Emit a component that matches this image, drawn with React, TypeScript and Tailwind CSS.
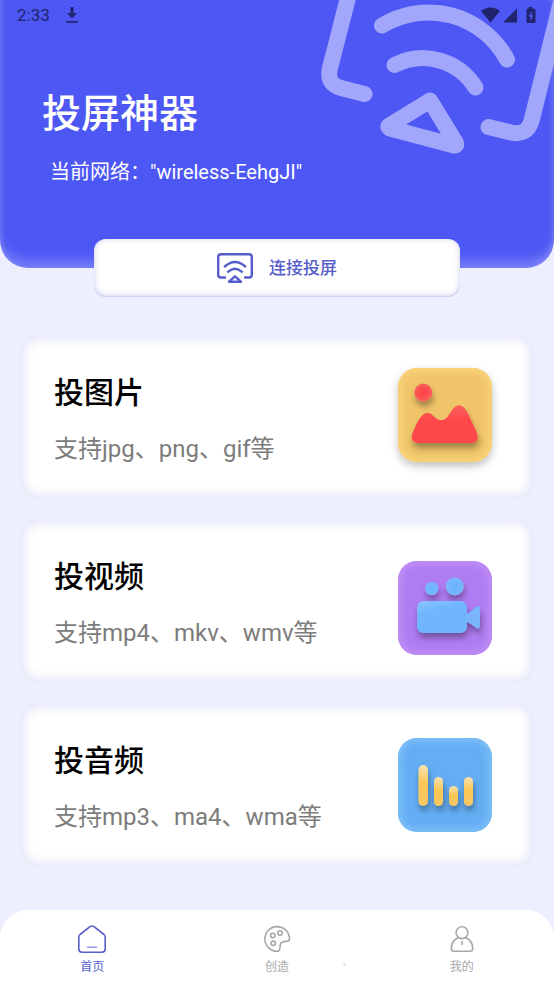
import React from "react";

interface CardProps {
  title: string;
  desc: string;
  icon: React.ReactNode;
}

interface TileProps {
  id: string;
  color: string;
  glow: string;
  viewBox: string;
  shadow?: boolean;
  children: React.ReactNode;
}

const StatusBar = () => (
  <div className="flex h-[30px] items-center justify-between pl-[17px] pr-[17px] text-[#20246f]">
    <div className="flex items-center gap-4">
      <span className="text-[17px] leading-5">2:33</span>
      <svg className="h-4 w-3" viewBox="0 0 12 16" fill="currentColor">
        <path d="M4.500 0h3v6H11l-5 5.500-5-5.500h3.500zM0 14h12v1.700H0z" />
      </svg>
    </div>
    <svg className="h-[16px] w-[56px]" viewBox="0 0 56 16" fill="currentColor">
      <path d="M0 4C5.500-.8 13.500-.8 19 4L9.500 15.500zM22 15.500L36 1.500v14z" />
      <path
        fillRule="evenodd"
        d="M47.500 0h4v1.700h2q1 0 1 1V15q0 1-1 1h-7q-1 0-1-1V2.700q0-1 1-1h1zM51 4L47.500 9.500h2V14l3-5.700h-2z"
      />
    </svg>
  </div>
);

const CastArt = () => (
  <svg
    className="absolute right-0 top-0 h-[170px] w-[254px]"
    viewBox="0 0 254 170"
    fill="none"
    stroke="#a3a7fb"
    strokeWidth="16"
    strokeLinecap="round"
    strokeLinejoin="round"
  >
    <path d="M50-10L30 68Q26 84 41 88L64.500 94" />
    <path d="M188.500 127L211 132.500Q227 136 231.500 121L264-10" />
    <path d="M82 25.500A89 89 0 0 1 207 59.500" />
    <path d="M94.500 65A62 62 0 0 1 175.500 87.500" />
    <path d="M130 100.500L88.500 126Q88 127 90 128.500L154 145.500Q157 146 156 143Z" />
  </svg>
);

const CastIcon = () => (
  <svg
    className="h-[30px] w-9"
    viewBox="0 0 36 30"
    fill="none"
    stroke="currentColor"
    strokeWidth="2.400"
    strokeLinecap="round"
    strokeLinejoin="round"
  >
    <path d="M8 24.500H4Q1.200 24.500 1.200 21.700V4Q1.200 1.200 4 1.200H32Q34.800 1.200 34.800 4V21.700Q34.800 24.500 32 24.500H28" />
    <path d="M7.800 13.500Q18 4.500 28.200 13.500M11 18.800Q18 12.500 25 18.800M18 23.300L12 28.700H24Z" />
  </svg>
);

const Tile: React.FC<TileProps> = ({ id, color, glow, viewBox, shadow, children }) => (
  <svg className="h-[94px] w-[94px] shrink-0 overflow-visible" viewBox={viewBox}>
    <defs>
      <clipPath id={`${id}-clip`}>
        <rect width="94" height="94" rx="19" />
      </clipPath>
      <filter id={`${id}-glow`} x="-20%" y="-20%" width="140%" height="140%">
        <feGaussianBlur stdDeviation="3" />
      </filter>
      <filter id={`${id}-drop`} x="-30%" y="-30%" width="160%" height="180%">
        <feDropShadow dx="1" dy="5" stdDeviation="3" floodColor="#000" floodOpacity="0.35" />
      </filter>
      <filter id={`${id}-base`} x="-20%" y="-20%" width="140%" height="150%">
        <feDropShadow dx="0" dy="4" stdDeviation="4" floodColor="#000" floodOpacity="0.25" />
      </filter>
    </defs>
    <rect width="94" height="94" rx="19" fill={color} filter={shadow ? `url(#${id}-base)` : undefined} />
    <g clipPath={`url(#${id}-clip)`}>
      <rect width="94" height="94" rx="19" fill="none" stroke={glow} strokeWidth="7" filter={`url(#${id}-glow)`} />
    </g>
    <g filter={`url(#${id}-drop)`}>{children}</g>
  </svg>
);

const ImageIcon = () => (
  <Tile id="image" color="#f1c569" glow="#f9d57c" viewBox="0 2 94 94" shadow>
    <defs>
      <radialGradient id="image-dot">
        <stop offset="0.3" stopColor="#fd474b" />
        <stop offset="1" stopColor="#f9605a" />
      </radialGradient>
      <linearGradient id="image-hill" x1="0" y1="0" x2="0" y2="1">
        <stop offset="0" stopColor="#f7615b" />
        <stop offset="0.4" stopColor="#fe474b" />
      </linearGradient>
    </defs>
    <circle cx="25.300" cy="24.500" r="9" fill="url(#image-dot)" />
    <path
      d="M20 75Q11 74 15 64L20 53Q28 39 36 48.500Q43 56 50 48.500L53 43.500Q61 31 69 43.500L79 65Q82 74 74 75Z"
      fill="url(#image-hill)"
    />
  </Tile>
);

const VideoIcon = () => (
  <Tile id="video" color="#b07cf3" glow="#c190f5" viewBox="0 -7 94 94">
    <defs>
      <linearGradient id="video-body" x1="0" y1="0" x2="0.4" y2="1">
        <stop offset="0" stopColor="#8bc6ff" />
        <stop offset="0.4" stopColor="#6fb5fe" />
      </linearGradient>
      <radialGradient id="video-dot">
        <stop offset="0.3" stopColor="#6cb4fd" />
        <stop offset="1" stopColor="#7cb5f9" />
      </radialGradient>
    </defs>
    <circle cx="33.700" cy="27.500" r="6.700" fill="url(#video-dot)" />
    <circle cx="56.700" cy="25.300" r="9" fill="url(#video-dot)" />
    <rect x="19" y="40" width="50" height="32" rx="6.500" fill="url(#video-body)" />
    <path d="M69 53Q73 51 77 46.500Q82 42 82 49V64Q82 70 77 66Q73 62.500 69 61Z" fill="#78b5fa" />
  </Tile>
);

const AudioIcon = () => (
  <Tile id="audio" color="#64aef4" glow="#7fc0f8" viewBox="0 0 94 94">
    <defs>
      <linearGradient id="audio-bar" x1="0" y1="0" x2="0" y2="1">
        <stop offset="0" stopColor="#f6e3b4" />
        <stop offset="0.45" stopColor="#fbc755" />
        <stop offset="1" stopColor="#f7c765" />
      </linearGradient>
    </defs>
    <g fill="url(#audio-bar)">
      <rect x="20.500" y="27" width="9.500" height="41" rx="4.700" />
      <rect x="36" y="39" width="9" height="29" rx="4.500" />
      <rect x="51" y="48" width="9" height="20" rx="4.500" />
      <rect x="66" y="39" width="9" height="29" rx="4.500" />
    </g>
  </Tile>
);

const Card: React.FC<CardProps> = ({ title, desc, icon }) => {
  return (
    <button
      type="button"
      className="flex h-[164px] w-full items-center justify-between rounded-2xl bg-white pl-[34px] pr-[42px] text-left shadow-[inset_0_0_12px_4px_#e2e4f8]"
    >
      <span className="flex flex-col gap-4 pt-1">
        <span className="text-[30px] font-medium leading-[44px] text-black">{title}</span>
        <span className="text-2xl leading-9 text-[#7c7c7c]">{desc}</span>
      </span>
      {icon}
    </button>
  );
};

const HomeIcon = () => (
  <svg className="h-7 w-7" viewBox="0 0 28 28" fill="none" stroke="currentColor" strokeWidth="1.600" strokeLinejoin="round" strokeLinecap="round">
    <path d="M12 1.700Q14 .3 16 1.700L26 9.500Q27.200 10.500 27.200 12V24Q27.200 27.200 24 27.200H4Q.8 27.200 .8 24V12Q.8 10.500 2 9.500Z" />
    <path d="M9.500 22.300H18.500" stroke="#9296e0" />
  </svg>
);

const PaletteIcon = () => (
  <svg className="h-7 w-7" viewBox="0 0 28 28" fill="none" stroke="currentColor" strokeWidth="1.600" strokeLinejoin="round">
    <path d="M26.500 13.500A12.300 12.300 0 1 0 14.500 26.200Q16.500 26.300 16.800 24L17.300 19.500Q17.700 17.300 20 16.900L25 15.900Q26.700 15.500 26.500 13.500Z" />
    <circle cx="9.800" cy="10.500" r="2.200" />
    <circle cx="17" cy="8" r="2.200" />
    <circle cx="10.300" cy="18.300" r="2.200" />
  </svg>
);

const UserIcon = () => (
  <svg className="h-7 w-7" viewBox="0 0 28 28" fill="none" stroke="currentColor" strokeWidth="1.600" strokeLinejoin="round" strokeLinecap="round">
    <circle cx="14" cy="7.700" r="5.900" />
    <path d="M10 12.800Q3.300 16 3.300 23.500Q3.300 26.200 6 26.200H22Q24.700 26.200 24.700 23.500Q24.700 16 18 12.800" />
    <path d="M14 16.500V19.500" />
  </svg>
);

const cards: CardProps[] = [
  { title: "投图片", desc: "支持jpg、png、gif等", icon: <ImageIcon /> },
  { title: "投视频", desc: "支持mp4、mkv、wmv等", icon: <VideoIcon /> },
  { title: "投音频", desc: "支持mp3、ma4、wma等", icon: <AudioIcon /> },
];

const tabs = [
  { label: "首页", icon: <HomeIcon />, active: true },
  { label: "创造", icon: <PaletteIcon />, active: false },
  { label: "我的", icon: <UserIcon />, active: false },
];

export default function App() {
  return (
    <div className="flex min-h-screen flex-col bg-[#edeffe] font-[Roboto,'Noto_Sans_CJK_SC',sans-serif]">
      <header className="relative overflow-hidden rounded-b-[28px] bg-[#4d57f4] pb-[82px] shadow-[inset_0_-12px_12px_-5px_rgba(255,255,255,0.25),inset_5px_0_6px_-5px_rgba(255,255,255,0.25),inset_-5px_0_6px_-5px_rgba(255,255,255,0.25)]">
        <CastArt />
        <div className="relative">
          <StatusBar />
          <h1 className="mt-[60px] pl-[42px] text-[39px] font-medium leading-[48px] text-white">投屏神器</h1>
          <p className="mt-5 pl-[50px] text-xl leading-7 text-white">当前网络："wireless-EehgJI"</p>
        </div>
      </header>

      <button
        type="button"
        className="relative mx-auto -mt-[29px] flex h-[58px] w-[66%] items-center justify-center gap-4 rounded-xl bg-white text-[#575dcb] shadow-[inset_0_-1px_6px_#c9cbf0,inset_0_-1px_1px_#cfd1f0]"
      >
        <CastIcon />
        <span className="text-[17px] font-medium leading-6">连接投屏</span>
      </button>

      <main className="flex flex-col gap-5 px-5 pb-10 pt-[38px]">
        {cards.map((card) => (
          <Card key={card.title} {...card} />
        ))}
      </main>

      <nav className="relative mt-auto grid h-[74px] grid-cols-3 rounded-t-[28px] bg-white">
        {tabs.map((tab) => (
          <a
            key={tab.label}
            href="#"
            className={`flex flex-col items-center gap-[5px] pt-[15px] ${tab.active ? "text-[#575dcb]" : "text-[#a8a8a8]"}`}
          >
            {tab.icon}
            <span className="text-xs leading-[18px]">{tab.label}</span>
          </a>
        ))}
        <span className="absolute left-[62%] top-[53px] h-[3px] w-[3px] rounded-full bg-[#e4e4e4]" />
      </nav>
    </div>
  );
}
